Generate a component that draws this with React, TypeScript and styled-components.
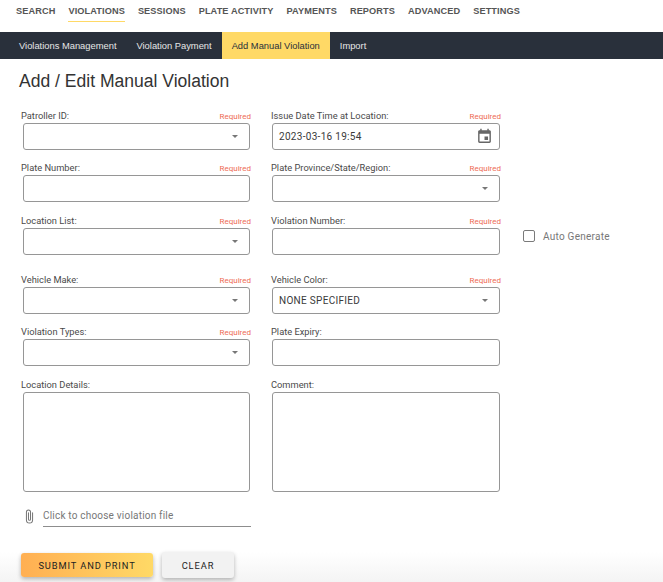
import React from "react";
import styled, { createGlobalStyle } from "styled-components";

const Global = createGlobalStyle`
  html, body { margin: 0; padding: 0; background: #fff; }
  body { font-family: Roboto, "Liberation Sans", sans-serif; overflow: hidden; }
`;
const Page = styled.div`
  width: 663px; height: 582px; overflow: hidden; position: relative;
  background: linear-gradient(to bottom, #fff 552px, #f4f4f4 582px);
`;
const TopNav = styled.nav`
  height: 32px; display: flex; gap: 13px; padding-left: 16px; align-items: flex-start;
`;
const NavItem = styled.a<{ $active?: boolean }>`
  font: 700 9.2px/1 "Liberation Sans", Arial, sans-serif; letter-spacing: 0.1px;
  color: #555; height: 14px; padding-top: 7px; white-space: nowrap;
  border-bottom: 1px solid ${(p) => (p.$active ? "#ffd966" : "transparent")};
`;
const SubNav = styled.div`
  height: 27px; background: #29303b; display: flex; padding-left: 9px;
`;
const SubItem = styled.a<{ $active?: boolean }>`
  font: 400 9.35px/28px "Liberation Sans", Arial, sans-serif;
  padding: 0 10px; white-space: nowrap;
  background: ${(p) => (p.$active ? "#ffd966" : "transparent")};
  color: ${(p) => (p.$active ? "#29303b" : "#e6e6e6")};
`;
const Title = styled.h1`
  margin: 12px 0 0 19px; height: 21px;
  font: 400 17.55px/21px "Liberation Sans", Arial, sans-serif; color: #333;
`;
const FormGrid = styled.div`
  margin: 15px 0 0 21px; width: 480px;
  display: grid; grid-template-columns: 230px 230px; column-gap: 20px;
  grid-template-rows: 52px 53px 59px 52px 53px 116px;
`;
const Field = styled.div`
  display: flex; flex-direction: column; min-width: 0;
`;
const Head = styled.div`
  height: 15px; padding-top: 1px; display: flex; justify-content: space-between; align-items: center;
`;
const Label = styled.span`
  font-size: 9.3px; color: #4a4a4a;
`;
const Required = styled.span`
  font-size: 8px; margin-top: 1px; color: #ee6c55;
`;
const Box = styled.div<{ $tall?: boolean; $right?: boolean }>`
  margin-left: ${(p) => (p.$right ? "1px" : "2px")};
  width: ${(p) => (p.$right ? "228px" : "227px")}; box-sizing: border-box;
  height: ${(p) => (p.$tall ? "100px" : "27px")};
  border: 1px solid #969696; border-radius: 3px;
  display: flex; align-items: center; justify-content: space-between;
  padding: 0 6px; font-size: 10px; color: #3a3a3a; letter-spacing: 0.3px;
`;
const Caret = styled.i`
  width: 0; height: 0; margin-right: 5px;
  border-left: 3px solid transparent; border-right: 3px solid transparent;
  border-top: 3px solid #777;
`;
const Auto = styled.label`
  position: absolute; left: 523px; top: 230px;
  display: flex; align-items: center; gap: 8px;
  font-size: 10px; letter-spacing: 0.25px; color: #777; line-height: 11px;
`;
const Check = styled.span`
  width: 12px; height: 12px; box-sizing: border-box; border: 1.5px solid #7a7a7a; border-radius: 2px;
`;
const FileRow = styled.div`
  margin: 13px 0 0 25px; display: flex; align-items: flex-start; gap: 9px; width: 226px;
`;
const ClipSlot = styled.span`
  display: flex; padding-top: 4px;
`;
const FileText = styled.div`
  flex: 1; height: 21px; border-bottom: 1px solid #8d8d8d; font-size: 10px; letter-spacing: 0.2px;
  color: #777; line-height: 21px;
`;
const Actions = styled.div`
  margin: 25px 0 0 21px; display: flex; gap: 9px; align-items: center;
`;
const Btn = styled.button<{ $primary?: boolean }>`
  border: 0; border-radius: 3px; padding: 0; cursor: pointer;
  font: 400 9.3px Roboto, sans-serif; letter-spacing: 0.9px; color: #222;
  width: ${(p) => (p.$primary ? "132px" : "72px")};
  height: ${(p) => (p.$primary ? "24px" : "26px")};
  background: ${(p) => (p.$primary ? "linear-gradient(90deg,#ffaf52,#ffd966)" : "#f2f2f2")};
  box-shadow: 0 2px 4px rgba(0,0,0,.28);
`;

const Cal = () => (
  <svg width="17" height="17" viewBox="0 0 24 24" fill="#666">
    <path d="M17 12h-5v5h5v-5zM16 1v2H8V1H6v2H5c-1.11 0-1.99.9-1.99 2L3 19a2 2 0 0 0 2 2h14c1.1 0 2-.9 2-2V5c0-1.1-.9-2-2-2h-1V1h-2zm3 18H5V8h14v11z" />
  </svg>
);
const Clip = () => (
  <svg width="9" height="15" viewBox="6 1 12 22" fill="none" stroke="#777" strokeWidth="1.5" strokeLinecap="round">
    <path d="M16.5 6.5v10.5a4.5 4.5 0 0 1-9 0V5.5a3 3 0 0 1 6 0V16a1.5 1.5 0 0 1-3 0V6.5" />
  </svg>
);

const nav = ["SEARCH", "VIOLATIONS", "SESSIONS", "PLATE ACTIVITY", "PAYMENTS", "REPORTS", "ADVANCED", "SETTINGS"];
const sub = ["Violations Management", "Violation Payment", "Add Manual Violation", "Import"];
type F = { label: string; req?: boolean; select?: boolean; value?: string; cal?: boolean; tall?: boolean };
const fields: F[] = [
  { label: "Patroller ID:", req: true, select: true },
  { label: "Issue Date Time at Location:", req: true, value: "2023-03-16 19:54", cal: true },
  { label: "Plate Number:", req: true },
  { label: "Plate Province/State/Region:", req: true, select: true },
  { label: "Location List:", req: true, select: true },
  { label: "Violation Number:", req: true },
  { label: "Vehicle Make:", req: true, select: true },
  { label: "Vehicle Color:", req: true, select: true, value: "NONE SPECIFIED" },
  { label: "Violation Types:", req: true, select: true },
  { label: "Plate Expiry:" },
  { label: "Location Details:", tall: true },
  { label: "Comment:", tall: true },
];

export default function App() {
  return (
    <Page>
      <Global />
      <TopNav>
        {nav.map((n) => <NavItem key={n} $active={n === "VIOLATIONS"}>{n}</NavItem>)}
      </TopNav>
      <SubNav>
        {sub.map((s) => <SubItem key={s} $active={s === "Add Manual Violation"}>{s}</SubItem>)}
      </SubNav>
      <Title>Add / Edit Manual Violation</Title>
      <FormGrid>
        {fields.map((f, i) => (
          <Field key={f.label}>
            <Head>
              <Label>{f.label}</Label>
              {f.req && <Required>Required</Required>}
            </Head>
            <Box $tall={f.tall} $right={i % 2 === 1}>
              <span>{f.value}</span>
              {f.select && <Caret />}
              {f.cal && <Cal />}
            </Box>
          </Field>
        ))}
      </FormGrid>
      <Auto><Check />Auto Generate</Auto>
      <FileRow>
        <ClipSlot><Clip /></ClipSlot>
        <FileText>Click to choose violation file</FileText>
      </FileRow>
      <Actions>
        <Btn $primary>SUBMIT AND PRINT</Btn>
        <Btn>CLEAR</Btn>
      </Actions>
    </Page>
  );
}
